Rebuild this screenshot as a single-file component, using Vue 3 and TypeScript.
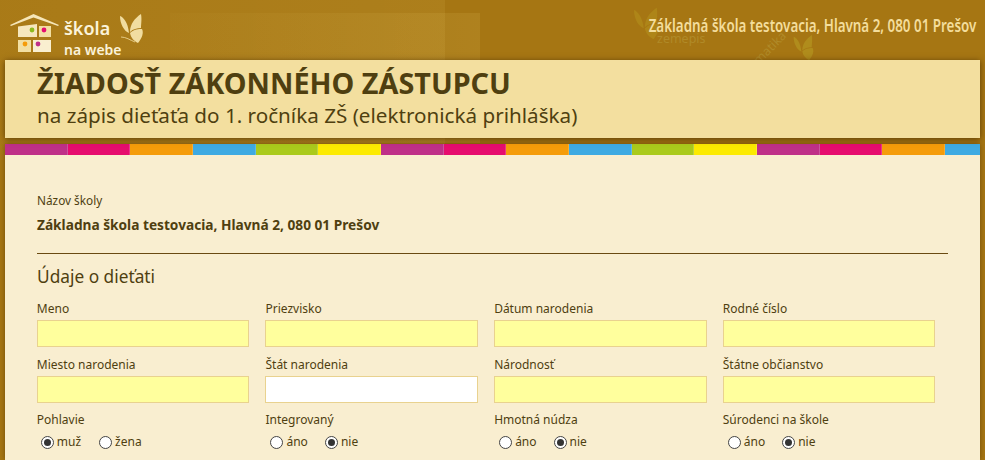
<script setup lang="ts">
interface Field { label: string; white?: boolean }
interface Radio { label: string; a: string; b: string; checked: 'a' | 'b'; pad: string }
const stripeColors = ['#bf3088', '#e60d6e', '#f59c0a', '#3faae2', '#aaca1c', '#fcea00']
const stripes = Array.from({ length: 16 }, (_, i) => stripeColors[i % 6])
const fields: Field[] = [
  { label: 'Meno' }, { label: 'Priezvisko' }, { label: 'Dátum narodenia' }, { label: 'Rodné číslo' },
  { label: 'Miesto narodenia' }, { label: 'Štát narodenia', white: true }, { label: 'Národnosť' }, { label: 'Štátne občianstvo' }
]
const radios: Radio[] = [
  { label: 'Pohlavie', a: 'muž', b: 'žena', checked: 'a', pad: 'first' },
  { label: 'Integrovaný', a: 'áno', b: 'nie', checked: 'b', pad: 'other' },
  { label: 'Hmotná núdza', a: 'áno', b: 'nie', checked: 'b', pad: 'other' },
  { label: 'Súrodenci na škole', a: 'áno', b: 'nie', checked: 'b', pad: 'other' }
]
</script>

<template>
  <div class="page">
    <div class="glow glow-b"></div>
    <div class="glow glow-a"></div>
    <span class="faint faint-a">zemepis</span>
    <span class="faint faint-b">matika</span>
    <svg class="faint-fly fly-1" viewBox="0 0 24 30" aria-hidden="true">
      <path d="M0 2C3 3 8 8 9 19 4 17 0 10 0 2zM21 0c1 5 0 11 0 14-4 0-8 1-11 4C10 10 15 4 21 0zM10 19c4-4 9-4 12-4 2 4 0 9-4 14-4-2-7-5-8-10z" fill="#b08c1c" />
    </svg>
    <svg class="faint-fly fly-2" viewBox="0 0 24 30" aria-hidden="true">
      <path d="M0 2C3 3 8 8 9 19 4 17 0 10 0 2zM21 0c1 5 0 11 0 14-4 0-8 1-11 4C10 10 15 4 21 0zM10 19c4-4 9-4 12-4 2 4 0 9-4 14-4-2-7-5-8-10z" fill="#ae8518" />
    </svg>
    <header class="top">
      <div class="logo">
        <svg class="house" viewBox="0 0 50 40" width="50" height="40" aria-hidden="true">
          <path d="M0 12 23.500 1 49 12l-1 1L23.500 4.500 1 13z" fill="#f6e6b8" />
          <path d="M8 13.500 27 11v13H8z" fill="#f6e7bd" />
          <rect x="29" y="13" width="12" height="11" fill="#f2dfa2" />
          <rect x="8" y="27" width="13" height="12" fill="#f2dfa2" />
          <rect x="23" y="27" width="18" height="12" fill="#f9efd0" />
          <circle cx="22" cy="17" r="2.400" fill="#8dbb1e" />
          <circle cx="34" cy="17" r="2.400" fill="#e60d6e" />
          <circle cx="15" cy="31" r="2.400" fill="#f59c0a" />
          <circle cx="28" cy="31" r="2.400" fill="#bf3088" />
        </svg>
        <div class="logo-text">
          <div class="logo-skola">škola</div>
          <div class="logo-web">na webe</div>
        </div>
        <svg class="fly" viewBox="0 0 24 30" width="24" height="30" aria-hidden="true">
          <path d="M0 2C3 3 8 8 9 19 4 17 0 10 0 2zM21 0c1 5 0 11 0 14-4 0-8 1-11 4C10 10 15 4 21 0zM10 19c4-4 9-4 12-4 2 4 0 9-4 14-4-2-7-5-8-10z" fill="#f1dda0" />
          <path d="M1 23c5 0 9 3 14 5" stroke="#f1dda0" stroke-width=".8" fill="none" />
        </svg>
      </div>
      <div class="school">Základná škola testovacia, Hlavná 2, 080 01 Prešov</div>
    </header>

    <section class="title">
      <h1>ŽIADOSŤ ZÁKONNÉHO ZÁSTUPCU</h1>
      <p>na zápis dieťaťa do 1. ročníka ZŠ (elektronická prihláška)</p>
    </section>

    <div class="sheet">
      <div class="stripes">
        <i v-for="(c, i) in stripes" :key="i" :style="{ background: c }"></i>
      </div>

      <main class="panel">
        <div class="small">Názov školy</div>
        <div class="name">Základna škola testovacia, Hlavná 2, 080 01 Prešov</div>
        <hr />
        <h2>Údaje o dieťati</h2>
        <div class="grid">
          <label v-for="f in fields" :key="f.label" class="field">
            <span>{{ f.label }}</span>
            <input type="text" :class="{ white: f.white }" />
          </label>
          <div v-for="r in radios" :key="r.label" class="field radios" :class="r.pad">
            <span>{{ r.label }}</span>
            <div class="opts">
              <label class="opt"><b class="dot" :class="{ on: r.checked === 'a' }"></b>{{ r.a }}</label>
              <label class="opt"><b class="dot" :class="{ on: r.checked === 'b' }"></b>{{ r.b }}</label>
            </div>
          </div>
        </div>
      </main>
    </div>
  </div>
</template>

<style>
html, body { margin: 0; height: 100%; overflow: hidden; background: #a67613; }
</style>

<style scoped>
.page {
  position: relative;
  height: 460px;
  overflow: hidden;
  padding: 0 5px;
  box-sizing: border-box;
  background: #a67613;
  font-family: "Noto Sans", "Open Sans", sans-serif;
  color: #4f3f10;
}
.glow { position: absolute; }
.glow-a { left: 170px; top: 13px; width: 310px; height: 130px; background: linear-gradient(90deg, rgba(255, 230, 130, 0.02), rgba(255, 230, 130, 0.1)); }
.glow-b { left: 0; top: 0; width: 445px; height: 160px; background: linear-gradient(90deg, rgba(255, 230, 130, 0.04), rgba(255, 230, 130, 0.08)); }
.faint { position: absolute; color: #b08a28; font-size: 12.500px; line-height: 8px; }
.faint-a { left: 657px; top: 35px; }
.faint-b { left: 750px; top: 44px; transform: rotate(-45deg); }
.faint-fly { position: absolute; }
.fly-1 { left: 792px; top: 35px; width: 24px; height: 26px; }
.fly-2 { left: 634px; top: 7px; width: 26px; height: 34px; }
.top { position: relative; height: 60px; }
.logo { position: absolute; left: 5px; top: 13px; display: flex; }
.house { flex: none; }
.logo-text { margin-left: 4px; color: #fbf3da; line-height: 1; }
.logo-skola { font-size: 18px; font-weight: 600; margin-top: 6px; }
.logo-web { font-size: 14px; font-weight: 600; margin-top: 6px; }
.fly { margin: 1px 0 0 -2px; }
.school {
  position: absolute;
  right: 4px;
  top: 16px;
  color: #f3dd9c;
  font-size: 17.500px;
  line-height: 18px;
  font-weight: 600;
  transform: scaleX(0.765);
  transform-origin: right center;
  white-space: nowrap;
}
.title {
  position: relative;
  z-index: 1;
  height: 78px;
  box-sizing: border-box;
  padding: 4px 32px 0;
  background: #f3df9f;
  box-shadow: 0 1px 6px rgba(60, 35, 0, 0.7);
}
h1 { margin: 0; font-size: 28.800px; line-height: 37px; font-weight: 700; color: #4f3f10; white-space: nowrap; }
.title p { margin: 0; font-size: 20.650px; line-height: 28px; color: #4f3f10; white-space: nowrap; }
.sheet { position: relative; margin-top: 6px; box-shadow: 0 0 5px rgba(60, 35, 0, 0.5); }
.stripes { display: flex; height: 11px; overflow: hidden; }
.stripes i { flex: none; width: 62.670px; height: 11px; box-sizing: border-box; border-right: 1px solid rgba(255, 255, 255, 0.18); }
.panel {
  height: 305px;
  box-sizing: border-box;
  padding: 37px 32px 0;
  background: #f9eed0;
  font-size: 12px;
}
.small { font-size: 11.800px; line-height: 16px; }
.name { margin-top: 8px; font-weight: 700; font-size: 13.700px; line-height: 18px; }
hr { height: 1px; margin: 19px 0 12px; border: 0; background: #6a4a12; }
h2 { margin: 0; font-size: 17.300px; line-height: 22px; font-weight: 400; }
.grid { display: grid; grid-template-columns: repeat(4, 212.500px); column-gap: 16.170px; margin: 13px 0 0 -0.200px; }
.field { display: block; height: 56px; }
.field > span { display: block; font-size: 12px; line-height: 15px; }
.field input {
  display: block;
  width: 100%;
  height: 27px;
  margin-top: 4px;
  box-sizing: border-box;
  border: 1px solid #e9d28f;
  background: #ffff9d;
  padding: 0;
  outline: 0;
}
.field input.white { background: #fff; }
.radios > span { margin-top: -1px; }
.opts { display: flex; margin-top: 7px; font-size: 12px; line-height: 16px; }
.first .opts { padding-left: 4px; gap: 18px; }
.other .opts { padding-left: 5px; gap: 17px; }
.opt { display: flex; align-items: center; gap: 3px; }
.dot {
  flex: none;
  width: 13px;
  height: 13px;
  box-sizing: border-box;
  border: 1px solid #444;
  border-radius: 50%;
  background: #fff;
  position: relative;
}
.dot.on::after {
  content: "";
  position: absolute;
  inset: 2px;
  border-radius: 50%;
  background: #333;
}
</style>
